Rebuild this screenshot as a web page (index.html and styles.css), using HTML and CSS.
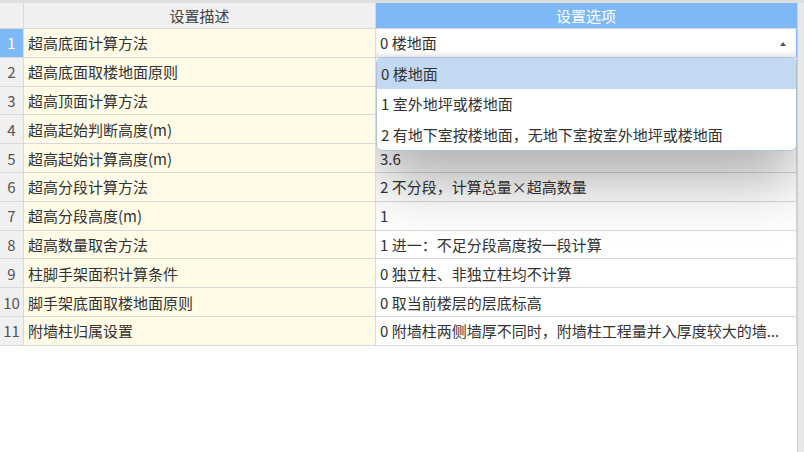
FILE: index.html
```html
<!DOCTYPE html>
<html lang="zh-CN">
<head>
    <meta charset="UTF-8">
    <title>设置</title>
    <link rel="stylesheet" href="styles.css">
</head>
<body>
    <div class="page">
        <div class="sheet">
            <div class="grid">
                <div class="cell head num"></div>
                <div class="cell head">设置描述</div>
                <div class="cell head active">设置选项</div>

                <div class="cell num current">1</div>
                <div class="cell desc">超高底面计算方法</div>
                <div class="cell opt editing">
                    <span>0 楼地面</span>
                    <span class="arrow"></span>
                </div>

                <div class="cell num">2</div>
                <div class="cell desc">超高底面取楼地面原则</div>
                <div class="cell opt"></div>

                <div class="cell num">3</div>
                <div class="cell desc">超高顶面计算方法</div>
                <div class="cell opt"></div>

                <div class="cell num">4</div>
                <div class="cell desc">超高起始判断高度(m)</div>
                <div class="cell opt"></div>

                <div class="cell num">5</div>
                <div class="cell desc">超高起始计算高度(m)</div>
                <div class="cell opt">3.6</div>

                <div class="cell num">6</div>
                <div class="cell desc">超高分段计算方法</div>
                <div class="cell opt">2 不分段，计算总量×超高数量</div>

                <div class="cell num">7</div>
                <div class="cell desc">超高分段高度(m)</div>
                <div class="cell opt">1</div>

                <div class="cell num">8</div>
                <div class="cell desc">超高数量取舍方法</div>
                <div class="cell opt">1 进一：不足分段高度按一段计算</div>

                <div class="cell num">9</div>
                <div class="cell desc">柱脚手架面积计算条件</div>
                <div class="cell opt">0 独立柱、非独立柱均不计算</div>

                <div class="cell num">10</div>
                <div class="cell desc">脚手架底面取楼地面原则</div>
                <div class="cell opt">0 取当前楼层的层底标高</div>

                <div class="cell num">11</div>
                <div class="cell desc">附墙柱归属设置</div>
                <div class="cell opt">0 附墙柱两侧墙厚不同时，附墙柱工程量并入厚度较大的墙...</div>
            </div>

            <!-- open dropdown of row 1, shadow clipped to the option column -->
            <div class="popup-layer">
                <div class="dropdown">
                    <div class="item selected">0 楼地面</div>
                    <div class="item">1 室外地坪或楼地面</div>
                    <div class="item">2 有地下室按楼地面，无地下室按室外地坪或楼地面</div>
                </div>
            </div>
        </div>
        <div class="side-bar"></div>
    </div>
</body>
</html>
```

FILE: styles.css
```css
body {
    margin: 0;
    background-color: #fff;
    font-family: "Noto Sans CJK SC", "Noto Sans", sans-serif;
    font-size: 15px;
    color: #333;
}
.page {
    display: flex;
    height: 452px;
    border-top: 3px solid #dedede;
    box-sizing: border-box;
}
.sheet {
    flex: 1;
    position: relative;
}
.side-bar {
    width: 6px;
    background-color: #e8e8e8;
    border-left: 1px solid #cfcfcf;
}
.grid {
    display: grid;
    grid-template-columns: 24px 352px 1fr;
    grid-template-rows: 26px repeat(11, 28.8px);
}
.cell {
    box-sizing: border-box;
    border-right: 1px solid #d9d9d9;
    border-bottom: 1px solid #d9d9d9;
    display: flex;
    align-items: center;
    white-space: nowrap;
    overflow: hidden;
}
.head {
    background-color: #f0f0f0;
    justify-content: center;
    color: #444;
}
.head.active {
    background-color: #7db9f6;
    color: #fff;
    border-right-color: #7db9f6;
}
.num {
    background-color: #f0f0f0;
    justify-content: center;
    color: #555;
}
.num.current {
    background-color: #7db9f6;
    color: #fff;
}
.desc {
    background-color: #fffbe7;
    padding-left: 4px;
}
.opt {
    background-color: #fff;
    padding-left: 4px;
}
.opt.editing {
    justify-content: space-between;
    padding-right: 10px;
    border-right: 1px solid #7db9f6;
    box-shadow: inset 0 -3px 4px rgba(0, 0, 0, 0.1);
}
.arrow {
    width: 0;
    height: 0;
    border-left: 3px solid transparent;
    border-right: 3px solid transparent;
    border-bottom: 4px solid #555;
    margin-top: 2px;
}
.popup-layer {
    position: absolute;
    left: 376px;
    top: 54px;
    right: 0;
    height: 220px;
    overflow: hidden;
    pointer-events: none;
}
.dropdown {
    border: 1px solid #aec4da;
    border-radius: 6px;
    background-color: #fff;
    overflow: hidden;
    box-shadow: 0 30px 60px rgba(0, 0, 0, 0.32);
}
.item {
    height: 30.5px;
    display: flex;
    align-items: center;
    padding-left: 4px;
    white-space: nowrap;
}
.item.selected {
    background-color: #c2d9f1;
}
```
